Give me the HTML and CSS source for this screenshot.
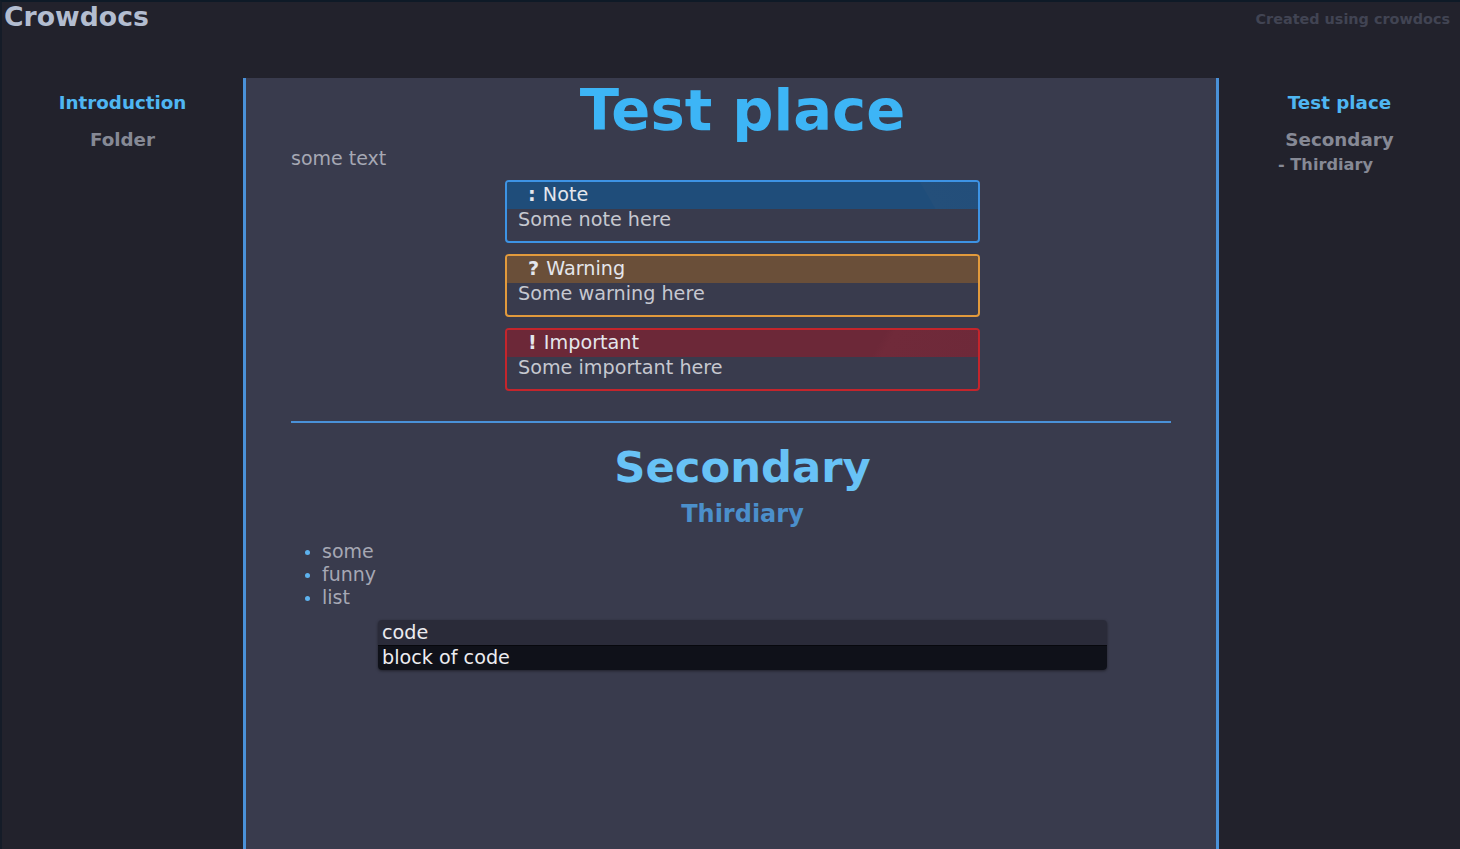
FILE: index.html
```html
<!DOCTYPE html>
<html lang="en">
<head>
<meta charset="utf-8">
<title>Crowdocs</title>
<link rel="stylesheet" href="styles.css">
</head>
<body>
<header class="topbar">
  <div class="brand">Crowdocs</div>
  <div class="credit">Created using crowdocs</div>
</header>
<div class="layout">
  <nav class="sidebar">
    <div class="nav-item active">Introduction</div>
    <div class="nav-item">Folder</div>
  </nav>
  <main class="panel">
    <div class="content">
      <h1 class="title">Test place</h1>
      <p class="para">some text</p>
      <div class="adm-list">
        <div class="adm note">
          <div class="adm-head"><b>:</b> Note</div>
          <div class="adm-body">Some note here</div>
        </div>
        <div class="adm warning">
          <div class="adm-head"><b>?</b> Warning</div>
          <div class="adm-body">Some warning here</div>
        </div>
        <div class="adm important">
          <div class="adm-head"><b>!</b> Important</div>
          <div class="adm-body">Some important here</div>
        </div>
      </div>
      <hr class="divider">
      <h2 class="h2">Secondary</h2>
      <h3 class="h3">Thirdiary</h3>
      <ul class="list">
        <li>some</li>
        <li>funny</li>
        <li>list</li>
      </ul>
      <div class="code">
        <div class="code-lang">code</div>
        <div class="code-body">block of code</div>
      </div>
    </div>
  </main>
  <aside class="toc">
    <div class="toc-item active">Test place</div>
    <div class="toc-item">Secondary</div>
    <div class="toc-item sub">- Thirdiary</div>
  </aside>
</div>
</body>
</html>
```

FILE: styles.css
```css
html, body {
  margin: 0;
  padding: 0;
}
body {
  background: #22222c;
  font-family: "DejaVu Sans", Verdana, sans-serif;
  color: #a9abb6;
  height: 849px;
  overflow: hidden;
  border-top: 2px solid #0e1a27;
  border-left: 2px solid #151c28;
  box-sizing: border-box;
}
.topbar {
  height: 76px;
  display: flex;
  justify-content: space-between;
  align-items: flex-start;
}
.brand {
  font-weight: bold;
  font-size: 26.7px;
  color: #b3bdd0;
  padding-left: 2px;
  line-height: 30px;
}
.credit {
  font-weight: bold;
  font-size: 14.4px;
  color: #414453;
  padding-right: 10px;
  padding-top: 9px;
  line-height: 16px;
}
.layout {
  display: grid;
  grid-template-columns: 241px 976px 241px;
  height: calc(849px - 78px);
}
.sidebar, .toc {
  display: flex;
  flex-direction: column;
  align-items: center;
  padding-top: 14px;
}
.nav-item, .toc-item {
  font-weight: bold;
  font-size: 18.3px;
  line-height: 22px;
  color: #868995;
  margin-bottom: 15px;
}
.nav-item.active, .toc-item.active {
  color: #4fb6f2;
}
.toc-item.sub {
  font-size: 16.2px;
  margin-top: -12px;
  margin-right: 28px;
}
.panel {
  background: #393b4d;
  border-left: 3px solid #4a91d8;
  border-right: 3px solid #4a91d8;
}
.content {
  padding: 0 22px 0 45px;
  display: flex;
  flex-direction: column;
}
.title {
  margin: 0;
  font-size: 57.6px;
  line-height: 65px;
  font-weight: bold;
  color: #3db5f6;
  text-align: center;
}
.para {
  margin: 4px 0 0;
  font-size: 19px;
  line-height: 22px;
  color: #a6a8b4;
}
.adm-list {
  display: flex;
  flex-direction: column;
  align-items: center;
  gap: 11px;
  margin-top: 11px;
}
.adm {
  width: 475px;
  box-sizing: border-box;
  border: 2px solid;
  border-radius: 4px;
  overflow: hidden;
  font-size: 19.2px;
}
.adm-head {
  height: 27px;
  line-height: 26px;
  padding-left: 21px;
  color: #e4e6ec;
}
.adm-head b {
  margin-right: 1px;
}
.adm-body {
  padding: 0 11px 10px;
  line-height: 22px;
  color: #c6c8d0;
}
.note { border-color: #3d93e4; }
.note .adm-head {
  background: linear-gradient(60deg, #1f4d7a 0%, #1f4d7a 88%, #244f7a 88.2%, #234e7a 100%);
}
.warning { border-color: #e29a3c; }
.warning .adm-head {
  background: #6a4f39;
}
.important { border-color: #c4252c; }
.important .adm-head {
  background: linear-gradient(120deg, #6c2838 0%, #6c2838 78%, #702a3a 80%, #6e2939 100%);
}
.divider {
  width: 880px;
  margin: 30px 0 0;
  border: 0;
  height: 2px;
  background: #4a91d8;
  align-self: flex-start;
}
.h2 {
  margin: 19px 0 0;
  font-size: 43.3px;
  line-height: 50px;
  font-weight: bold;
  color: #68c2f6;
  text-align: center;
}
.h3 {
  margin: 8px 0 0;
  font-size: 24px;
  line-height: 28px;
  font-weight: bold;
  color: #4b8fcb;
  text-align: center;
}
.list {
  margin: 12px 0 0;
  padding-left: 31px;
  font-size: 19px;
  line-height: 23px;
  color: #a6a8b4;
  list-style: none;
}
.list li {
  position: relative;
}
.list li::before {
  content: "";
  position: absolute;
  left: -17px;
  top: 10px;
  width: 5px;
  height: 5px;
  border-radius: 50%;
  background: #5db2ee;
}
.code {
  align-self: center;
  width: 729px;
  margin-top: 11px;
  border-radius: 4px;
  overflow: hidden;
  box-shadow: 0 1px 3px rgba(0, 0, 0, 0.45);
  font-size: 19.2px;
  color: #ececf0;
}
.code-lang {
  background: #2a2b39;
  line-height: 25px;
  padding: 0 4px;
  border-bottom: 1px solid #07080d;
}
.code-body {
  background: #0f1119;
  line-height: 24px;
  padding: 0 4px;
}
```
